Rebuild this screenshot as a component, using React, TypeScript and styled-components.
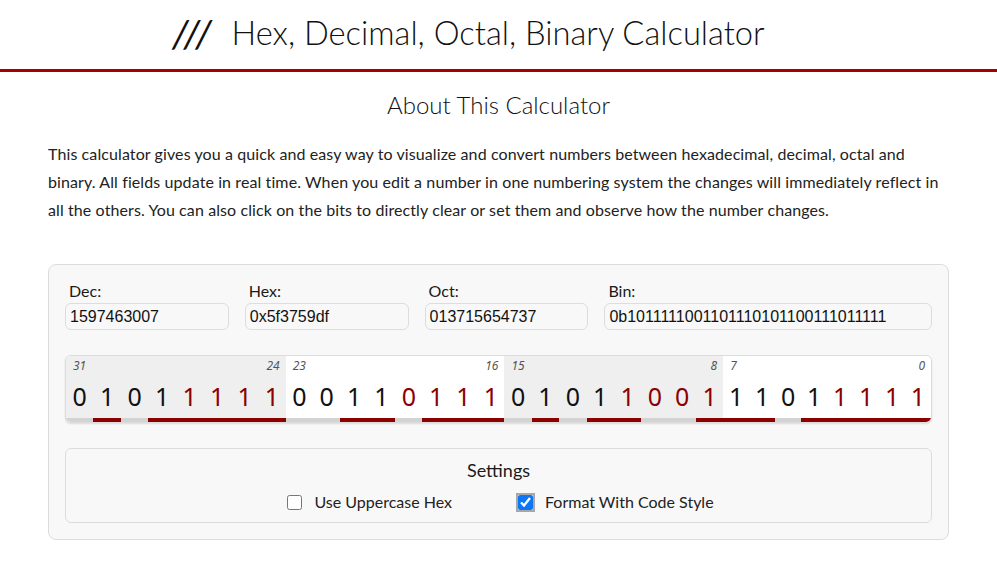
import React from "react";
import styled, { createGlobalStyle } from "styled-components";

const GlobalStyle = createGlobalStyle`
  html, body { margin: 0; padding: 0; background: #ffffff; }
  body { font-family: Lato, "Noto Sans", sans-serif; color: #1a1a1a; }
  * { box-sizing: border-box; }
`;

const Header = styled.header`
  height: 72px;
  border-bottom: 3px solid #a50000;
  display: flex;
  align-items: center;
  padding: 0 0 4px 172px;
  font-size: 32.7px;
  font-weight: 300;
  color: #111;
`;

const Slashes = styled.span`
  margin-right: 16px;
  font-size: 38px;
  letter-spacing: 3px;
  font-weight: 400;
  transform: skewX(-6deg);
  display: inline-block;
`;

const Main = styled.main`
  padding: 0 48px;
`;

const AboutTitle = styled.h2`
  margin: 16px 0 0;
  text-align: center;
  font-size: 24px;
  font-weight: 300;
  line-height: 34px;
  color: #111;
`;

const Paragraph = styled.p`
  margin: 18px 0 0;
  font-size: 16px;
  line-height: 28px;
  letter-spacing: 0.1px;
  color: #222;
`;

const Card = styled.section`
  margin-top: 40px;
  background: #f8f8f8;
  border: 1px solid #dcdcdc;
  border-radius: 8px;
  padding: 16px;
  display: flex;
  flex-direction: column;
`;

const Fields = styled.div`
  display: grid;
  grid-template-columns: minmax(0, 1fr) minmax(0, 1fr) minmax(0, 1fr) minmax(0, 2fr);
  column-gap: 16px;
`;

const Field = styled.label`
  display: flex;
  flex-direction: column;
  min-width: 0;
`;

const FieldLabel = styled.span`
  font-size: 16px;
  line-height: 20px;
  padding-left: 4px;
  margin-bottom: 2px;
  color: #1a1a1a;
`;

const Input = styled.input`
  width: 100%;
  min-width: 0;
  height: 27px;
  border: 1px solid #dddddd;
  border-radius: 6px;
  background: #f8f8f8;
  font-family: "Liberation Sans", Arial, sans-serif;
  font-size: 16px;
  color: #111;
  padding: 0 4px;
  outline: none;
`;

const BitsBox = styled.div`
  margin-top: 25px;
  display: grid;
  grid-template-columns: 220fr 219fr 219fr 208fr;
  border: 1px solid #dcdcdc;
  border-radius: 6px;
  overflow: hidden;
  background: #fff;
  box-shadow: 0 1px 2px rgba(0, 0, 0, 0.12);
`;

const Byte = styled.div<{ $shaded: boolean }>`
  display: flex;
  flex-direction: column;
  background: ${(p) => (p.$shaded ? "#efefef" : "#ffffff")};
`;

const IndexRow = styled.div`
  height: 18px;
  display: flex;
  justify-content: space-between;
  align-items: center;
  padding: 0 6px 0 7px;
  font-size: 12px;
  font-style: italic;
  color: #555;
  font-family: "Noto Sans", "Open Sans", sans-serif;
`;

const BitRow = styled.div`
  display: flex;
`;

const Bit = styled.div`
  flex: 1;
  display: flex;
  flex-direction: column;
  cursor: pointer;
`;

const Digit = styled.span<{ $low: boolean }>`
  height: 44px;
  display: flex;
  align-items: center;
  justify-content: center;
  font-family: "Noto Sans", "Open Sans", sans-serif;
  font-size: 25px;
  color: ${(p) => (p.$low ? "#8b0000" : "#111")};
`;

const Bar = styled.span<{ $on: boolean }>`
  height: 4px;
  background: ${(p) => (p.$on ? "#8b0000" : "#d3d3d3")};
`;

const Settings = styled.div`
  margin-top: 25px;
  border: 1px solid #dcdcdc;
  border-radius: 6px;
  padding: 9px 0 9px;
  display: flex;
  flex-direction: column;
  align-items: center;
`;

const SettingsTitle = styled.div`
  font-size: 18px;
  line-height: 24px;
  color: #1a1a1a;
`;

const Options = styled.div`
  margin-top: 9px;
  display: flex;
  gap: 66px;
  align-items: center;
  padding-left: 4px;
`;

const Option = styled.label`
  display: flex;
  align-items: center;
  gap: 12px;
  font-size: 16px;
  line-height: 22px;
  color: #222;
`;

const Check = styled.input<{ $focused?: boolean }>`
  width: 15px;
  height: 15px;
  margin: 0;
  accent-color: #0b76f7;
  border-radius: 3px;
  ${(p) => (p.$focused ? "box-shadow: 0 0 0 2px #a7a7a7; border-radius: 3px;" : "")}
`;

const VALUE = 1597463007;

export default function App() {
  const bits = VALUE.toString(2).padStart(32, "0").split("");
  const bytes = [0, 1, 2, 3].map((b) => bits.slice(b * 8, b * 8 + 8));

  return (
    <>
      <GlobalStyle />
      <Header>
        <Slashes>///</Slashes>
        <span>Hex, Decimal, Octal, Binary Calculator</span>
      </Header>
      <Main>
        <AboutTitle>About This Calculator</AboutTitle>
        <Paragraph>
          This calculator gives you a quick and easy way to visualize and convert numbers between
          hexadecimal, decimal, octal and binary. All fields update in real time. When you edit a
          number in one numbering system the changes will immediately reflect in all the others.
          You can also click on the bits to directly clear or set them and observe how the number
          changes.
        </Paragraph>
        <Card>
          <Fields>
            <Field>
              <FieldLabel>Dec:</FieldLabel>
              <Input defaultValue="1597463007" />
            </Field>
            <Field>
              <FieldLabel>Hex:</FieldLabel>
              <Input defaultValue="0x5f3759df" />
            </Field>
            <Field>
              <FieldLabel>Oct:</FieldLabel>
              <Input defaultValue="013715654737" />
            </Field>
            <Field>
              <FieldLabel>Bin:</FieldLabel>
              <Input defaultValue="0b1011111001101110101100111011111" />
            </Field>
          </Fields>
          <BitsBox>
            {bytes.map((byte, bi) => (
              <Byte key={bi} $shaded={bi % 2 === 0}>
                <IndexRow>
                  <span>{31 - bi * 8}</span>
                  <span>{24 - bi * 8}</span>
                </IndexRow>
                <BitRow>
                  {byte.map((b, i) => (
                    <Bit key={i}>
                      <Digit $low={i >= 4}>{b}</Digit>
                      <Bar $on={b === "1"} />
                    </Bit>
                  ))}
                </BitRow>
              </Byte>
            ))}
          </BitsBox>
          <Settings>
            <SettingsTitle>Settings</SettingsTitle>
            <Options>
              <Option>
                <Check type="checkbox" />
                Use Uppercase Hex
              </Option>
              <Option>
                <Check type="checkbox" defaultChecked $focused />
                Format With Code Style
              </Option>
            </Options>
          </Settings>
        </Card>
      </Main>
    </>
  );
}
